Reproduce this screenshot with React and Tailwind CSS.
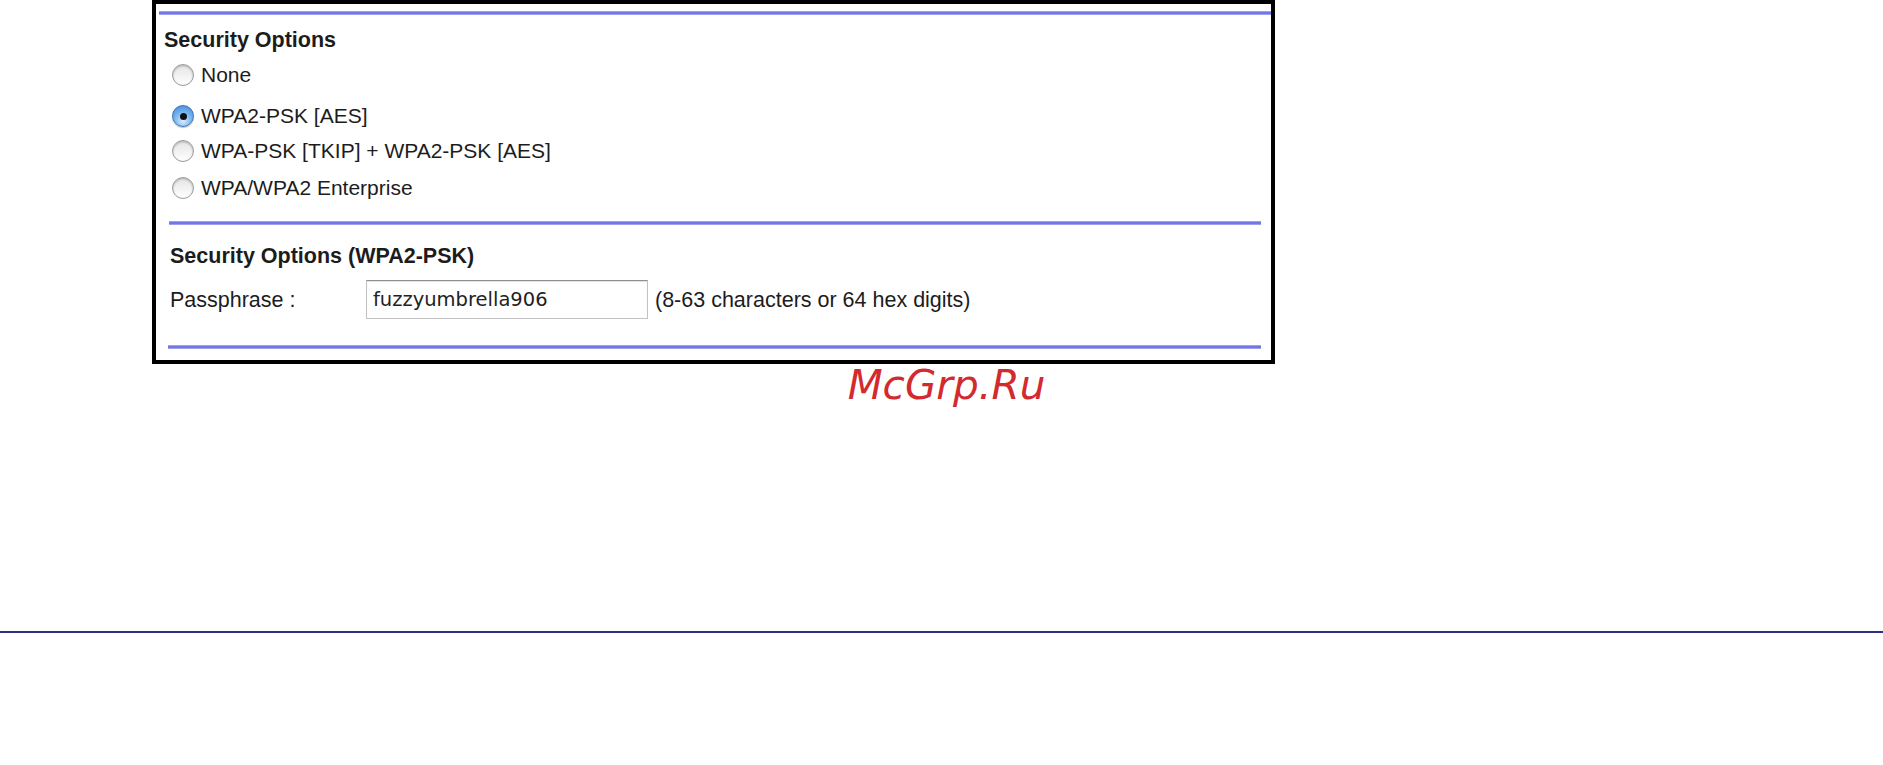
import React, { useState } from 'react';

const OPTIONS = [
  { id: 'none', label: 'None', gap: 'mt-[11px]' },
  { id: 'wpa2', label: 'WPA2-PSK [AES]', gap: 'mt-[17px]' },
  { id: 'mixed', label: 'WPA-PSK [TKIP] + WPA2-PSK [AES]', gap: 'mt-[11px]' },
  { id: 'ent', label: 'WPA/WPA2 Enterprise', gap: 'mt-[13px]' },
];

// Aqua-style radio button
const Radio = ({ checked }) =>
  checked ? (
    <span className="flex h-[22px] w-[22px] shrink-0 items-center justify-center rounded-full border border-[#3f74b5] bg-[radial-gradient(circle_at_50%_75%,#d6ecff_0%,#7ab8f2_45%,#3d84d8_100%)] shadow-[0_1px_1px_rgba(0,0,0,0.25)]">
      <span className="h-[7px] w-[7px] rounded-full bg-[#111]" />
    </span>
  ) : (
    <span className="h-[22px] w-[22px] shrink-0 rounded-full border border-[#9c9c9c] bg-linear-to-b from-[#e4e4e4] to-white shadow-[inset_0_1px_2px_rgba(0,0,0,0.25)]" />
  );

// Blue rule between the sections
const Rule = ({ className = '' }) => (
  <div className={`h-[4px] bg-linear-to-b from-[#b4b4f2] via-[#5f5fe2] to-[#b4b4f2] ${className}`} />
);

const App = () => {
  const [mode, setMode] = useState('wpa2');
  const [pass, setPass] = useState('fuzzyumbrella906');

  return (
    <div className="h-[765px] w-full bg-white font-['Liberation_Sans',Arial,sans-serif] text-[#1c1c1c]">
      <div className="ml-[152px] w-[1123px] border-[4px] border-black">
        <div className="flex flex-col pb-[11px] pt-[7px]">
          <Rule className="ml-[3px]" />

          <h3 className="ml-[8px] mt-[13px] text-[21.5px] font-bold leading-[24px]">Security Options</h3>

          {OPTIONS.map((o) => (
            <label
              key={o.id}
              className={`ml-[16px] flex h-[24px] cursor-pointer items-center gap-[7px] text-[21px] leading-[24px] ${o.gap}`}
              onClick={() => setMode(o.id)}
            >
              <Radio checked={mode === o.id} />
              <span>{o.label}</span>
            </label>
          ))}

          <Rule className="ml-[13px] mr-[10px] mt-[21px]" />

          <h3 className="ml-[14px] mt-[19px] text-[21.5px] font-bold leading-[24px]">Security Options (WPA2-PSK)</h3>

          <div className="ml-[14px] mt-[12px] flex items-center text-[21.5px] leading-[24px]">
            <span className="w-[196px]">Passphrase :</span>
            <input
              type="text"
              value={pass}
              onChange={(e) => setPass(e.target.value)}
              className="h-[39px] w-[282px] border border-[#c2c2c2] border-t-[#8f8f8f] px-[6px] font-['DejaVu_Sans',sans-serif] text-[19.5px] text-[#222] shadow-[inset_0_1px_1px_rgba(0,0,0,0.12)] outline-none"
            />
            <span className="ml-[7px]">(8-63 characters or 64 hex digits)</span>
          </div>

          <Rule className="ml-[12px] mr-[10px] mt-[26px]" />
        </div>
      </div>

      <p className="mt-[1px] pl-[10px] text-center font-['DejaVu_Sans',sans-serif] text-[40.5px] italic leading-[40px] text-[#d22a2e]">
        McGrp.Ru
      </p>

      <div className="mt-[226px] h-[2px] w-full bg-[#2d2e88]" />
    </div>
  );
};

export default App;
